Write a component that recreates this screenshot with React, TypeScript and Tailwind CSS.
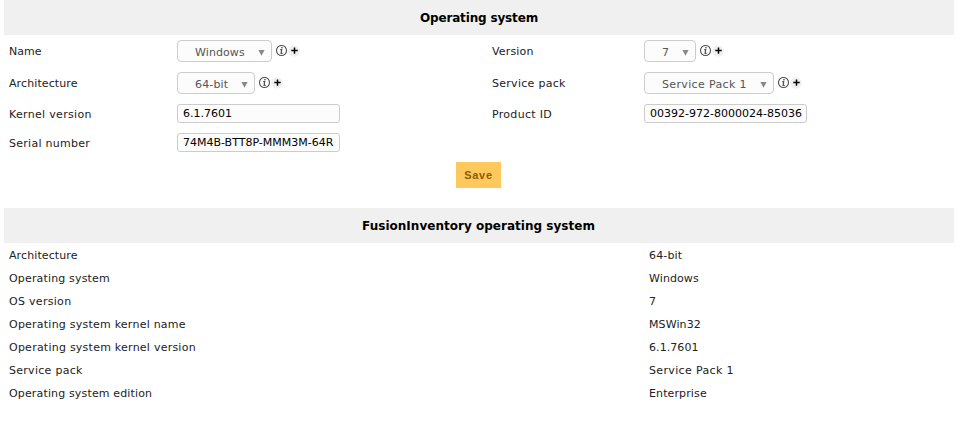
import React from "react";

function Info() {
  return (
    <svg className="block h-[12px] w-[12px] shrink-0" viewBox="0 0 12 12" fill="none">
      <circle cx="5.5" cy="5.5" r="5" stroke="#505050" strokeWidth="1.1" />
      <path d="M4.2 4.6h1.5L5.1 8.4h1.6" stroke="#505050" strokeWidth="1.2" />
      <rect x="5.2" y="2" width="1.4" height="1.4" fill="#505050" />
    </svg>
  );
}

function Plus() {
  return (
    <svg className="block h-[12px] w-[12px] shrink-0" viewBox="0 0 12 12">
      <circle cx="6" cy="6" r="5.8" fill="#f0f0f0" />
      <path d="M6.5 2.4v6.4M3.3 5.6h6.4" stroke="#000" strokeWidth="1.5" />
    </svg>
  );
}

function Select({ width, label, tracking = "" }: { width: string; label: string; tracking?: string }) {
  return (
    <div className="flex items-center">
      <div className={`${width} flex h-[22px] items-center justify-between rounded-[4px] border border-[#ccc] bg-[#fcfcfc] pl-[17px] pr-[6px] text-[#555]`}>
        <span className={`whitespace-nowrap pt-[2px] ${tracking}`}>{label}</span>
        <svg className="mt-[4px] h-[6px] w-[7px]" viewBox="0 0 7 6"><path d="M0.4 0h6.2L3.5 5.8z" fill="#888" /></svg>
      </div>
      <div className="ml-[4px] flex items-center">
        <Info />
        <Plus />
      </div>
    </div>
  );
}

function Input({ value }: { value: string }) {
  return (
    <div className="h-[19px] w-[163px] overflow-hidden whitespace-nowrap rounded-[3px] border border-[#ccc] bg-[#fcfcfc] pl-[5px] leading-[17px] text-black">{value}</div>
  );
}

function Row({ label, children, height, labelStyle }: { label: string; children?: React.ReactNode; height: string; labelStyle: string }) {
  return (
    <div className={`${height} flex items-center`}>
      <div className={`${labelStyle} shrink-0`}>{label}</div>
      {children}
    </div>
  );
}

const details = [
  ["Architecture", "tracking-[0.1px]", "64-bit", "tracking-[0.15px]"],
  ["Operating system", "tracking-[0.16px]", "Windows", "tracking-[0.1px]"],
  ["OS version", "tracking-[0.3px]", "7", ""],
  ["Operating system kernel name", "tracking-[0.23px]", "MSWin32", "tracking-[0.1px]"],
  ["Operating system kernel version", "tracking-[0.24px]", "6.1.7601", "tracking-[0.07px]"],
  ["Service pack", "tracking-[0.28px]", "Service Pack 1", "tracking-[0.35px]"],
  ["Operating system edition", "tracking-[0.15px]", "Enterprise", "tracking-[0.12px]"],
];

export default function App() {
  return (
    <div className="h-[429px] w-[956px] overflow-hidden bg-white pl-[4px] pr-[2px] font-['DejaVu_Sans',sans-serif] text-[11px] leading-[15px] text-[#222]">
      <h2 className="flex h-[35px] items-center justify-center bg-[#f0f0f0] pt-px text-[12px] font-bold tracking-[-0.16px] text-black">Operating system</h2>
      <div className="flex h-[127px] pl-[5px]">
        <div className="w-[483px]">
          <Row label="Name" height="h-[32px]" labelStyle="w-[168px]"><Select width="w-[95px]" label="Windows" tracking="tracking-[0.1px]" /></Row>
          <Row label="Architecture" height="h-[32px]" labelStyle="w-[168px] tracking-[0.1px]"><Select width="w-[78px]" label="64-bit" tracking="tracking-[0.15px]" /></Row>
          <Row label="Kernel version" height="h-[29px]" labelStyle="w-[168px] pt-[2px] tracking-[0.32px]"><Input value="6.1.7601" /></Row>
          <Row label="Serial number" height="h-[29px]" labelStyle="w-[168px] pt-[2px] tracking-[0.27px]"><Input value="74M4B-BTT8P-MMM3M-64R" /></Row>
        </div>
        <div className="flex-1">
          <Row label="Version" height="h-[32px]" labelStyle="w-[152px] tracking-[0.15px]"><Select width="w-[52px]" label="7" /></Row>
          <Row label="Service pack" height="h-[32px]" labelStyle="w-[152px] tracking-[0.28px]"><Select width="w-[130px]" label="Service Pack 1" tracking="tracking-[0.35px]" /></Row>
          <Row label="Product ID" height="h-[29px]" labelStyle="w-[152px] pt-[2px] tracking-[0.3px]"><Input value="00392-972-8000024-85036" /></Row>
        </div>
      </div>
      <div className="flex h-[46px] justify-center pr-px"><button className="h-[26px] w-[45px] bg-[#fec95c] font-['Liberation_Sans',Arial,sans-serif] text-[11px] font-bold tracking-[0.7px] text-[#8f5a0a]">Save</button></div>
      <h2 className="flex h-[35px] items-center justify-center bg-[#f0f0f0] pr-px pt-px text-[12px] font-bold tracking-[0.02px] text-black">FusionInventory operating system</h2>
      {details.map(([label, labelTracking, value, valueTracking]) => (
        <div key={label} className="flex h-[23px] items-center pl-[5px] pt-[2px]">
          <div className={`w-[640px] ${labelTracking}`}>{label}</div>
          <div className={valueTracking}>{value}</div>
        </div>
      ))}
    </div>
  );
}
